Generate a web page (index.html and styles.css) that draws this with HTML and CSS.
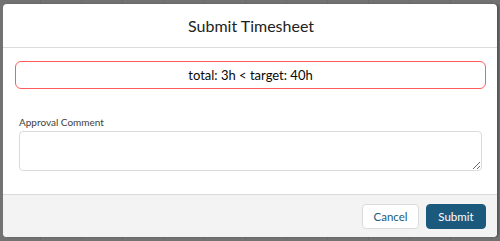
FILE: index.html
```html
<!DOCTYPE html>
<html lang="en">
<head>
  <meta charset="UTF-8">
  <meta name="viewport" content="width=device-width, initial-scale=1.0">
  <title>Submit Timesheet</title>
  <link rel="stylesheet" href="styles.css">
</head>
<body>
  <div class="backdrop">
    <div class="modal">
      <div class="modal-header">
        <h2>Submit Timesheet</h2>
      </div>
      <div class="modal-body">
        <div class="warning">total: 3h &lt; target: 40h</div>
        <label class="field-label" for="comment">Approval Comment</label>
        <textarea id="comment" class="comment"></textarea>
      </div>
      <div class="modal-footer">
        <button class="btn btn-neutral">Cancel</button>
        <button class="btn btn-brand">Submit</button>
      </div>
    </div>
  </div>
</body>
</html>
```

FILE: styles.css
```css
html, body {
  margin: 0;
  height: 100%;
}
body {
  font-family: Lato, "Open Sans", Arial, sans-serif;
  color: #080707;
}
.backdrop {
  height: 100%;
  box-sizing: border-box;
  padding: 4px 3px 4px 3px;
  background-color: #727272;
  background-image: repeating-linear-gradient(90deg, transparent 0, transparent 40px, rgba(0,0,0,0.06) 40px, rgba(0,0,0,0.06) 41px);
}
.modal {
  height: 233px;
  display: flex;
  flex-direction: column;
  background: #fff;
  border-radius: 4px;
  overflow: hidden;
  box-shadow: 2px 0 2px rgba(0,0,0,0.25);
}
.modal-header {
  height: 43px;
  border-bottom: 1px solid #dddbda;
  display: flex;
  align-items: center;
  justify-content: center;
}
.modal-header h2 {
  margin: 0 0 0 2px;
  font-size: 16px;
  font-weight: 400;
  color: #222;
}
.modal-body {
  flex: 1;
  padding: 13px 11px 0 12px;
}
.warning {
  height: 26px;
  border: 1px solid #ff5d5d;
  border-radius: 6px;
  display: flex;
  align-items: center;
  justify-content: center;
  font-size: 13px;
  font-weight: 400;
}
.field-label {
  display: block;
  margin: 27px 0 3px 4px;
  font-size: 10px;
  color: #3e3e3c;
}
.comment {
  display: block;
  box-sizing: border-box;
  width: 463px;
  height: 40px;
  margin-left: 4px;
  border: 1px solid #dddbda;
  border-radius: 4px;
  resize: vertical;
  font-family: inherit;
}
.modal-footer {
  height: 42px;
  border-top: 1px solid #dddbda;
  background: #f3f3f3;
  display: flex;
  align-items: center;
  justify-content: flex-end;
  gap: 7px;
  padding-right: 11px;
}
.btn {
  height: 25px;
  padding: 0 4px;
  border-radius: 4px;
  font-family: inherit;
  font-size: 11.5px;
  cursor: pointer;
}
.btn-neutral {
  background: #fff;
  border: 1px solid #dddbda;
  color: #1b5a7c;
  width: 57px;
}
.btn-brand {
  background: #1c5a7d;
  border: 1px solid #1c5a7d;
  color: #fff;
  width: 60px;
}
```
